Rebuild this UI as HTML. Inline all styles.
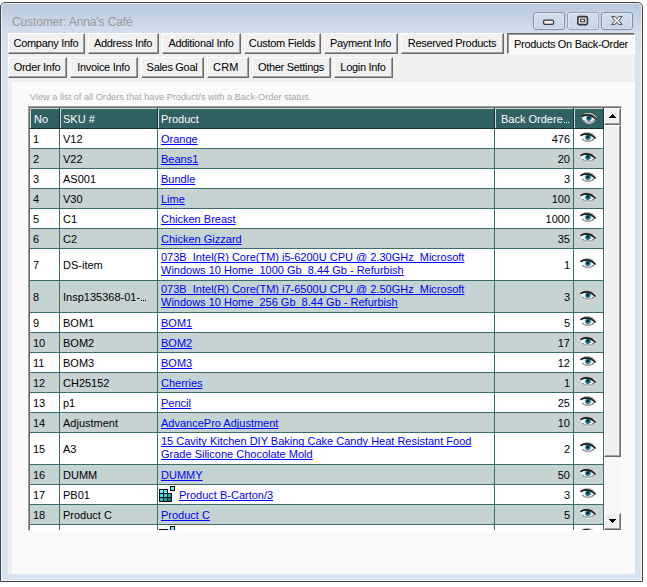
<!DOCTYPE html>
<html><head><meta charset="utf-8"><style>
*{box-sizing:border-box}
html,body{margin:0;padding:0;width:647px;height:587px;overflow:hidden;background:#fff;font-family:"Liberation Sans",sans-serif;font-size:11px}
#win{position:absolute;left:0;top:2px;width:643px;height:580px;border:1px solid #444;border-radius:5px 5px 0 0;background:linear-gradient(#b8c9dc 0px,#c4d3e4 14px,#d2dfed 30px,#d8e4f2 50px,#d8e4f2 100%)}
#win:before{content:"";position:absolute;left:0;top:0;right:0;bottom:0;border:1px solid rgba(255,255,255,.6);border-radius:4px 4px 0 0}
.t{position:absolute;line-height:12px;white-space:nowrap;color:#000}
.t a{color:#0000ff;text-decoration:underline;text-decoration-skip-ink:none}
.t.h{color:#fff}
.dots.dk{background:linear-gradient(90deg,#000 0 1px,transparent 1px 2px,#000 2px 3px,transparent 3px 4px,#000 4px 5px,transparent 5px)}
.dots{display:inline-block;width:6px;height:1px;position:relative;top:0px;margin-left:1px;background:linear-gradient(90deg,#fff 0 1px,transparent 1px 2px,#fff 2px 3px,transparent 3px 4px,#fff 4px 5px,transparent 5px)}
.t.num{transform:translateX(-100%)}
.bt{text-align:center;letter-spacing:-0.3px}
.title{position:absolute;font-size:12px;line-height:12px;color:#9a9a9a;white-space:nowrap;letter-spacing:-0.12px}
.tb{position:absolute;top:12px;width:32px;height:18px;border:1px solid #7e8fac;border-radius:3px;background:linear-gradient(#d3deeb,#c6d5e6)}
.tbg{border-color:#9aa6b6}
.tb:before{content:"";position:absolute;left:0;top:0;right:0;bottom:0;border:1px solid rgba(255,255,255,.35);border-radius:2px}
#client{position:absolute;left:8px;top:33px;width:627px;height:541px;background:#f0f0f0}
.btn{position:absolute;height:21px;background:#f0f0f0;border-top:1px solid #fff;border-left:1px solid #fff;border-right:1px solid #696969;border-bottom:1px solid #696969;box-shadow:inset -1px -1px 0 #a0a0a0}
.btn.sel{border-top:1px solid #696969;border-left:1px solid #696969;border-right:1px solid #fff;border-bottom:1px solid #fff;box-shadow:inset 1px 1px 0 #a0a0a0;background:repeating-conic-gradient(#ffffff 0 25%,#f0f0f0 0 50%) 0 0/2px 2px}
#panel{position:absolute;left:12px;top:82px;width:623px;height:492px;background:#fafafa}
.desc{position:absolute;font-size:9.2px;line-height:12px;color:#a6a6a6;white-space:nowrap}
#tbl{position:absolute;left:28px;top:106px;width:594px;height:425px;border-top:1px solid #a0a0a0;border-left:1px solid #a0a0a0;border-right:1px solid #fff;border-bottom:1px solid #fff;box-shadow:inset 1px 1px 0 #696969,inset -1px -1px 0 #e3e3e3;background:#fff}
#hdr{position:absolute;left:30px;top:108px;width:574px;height:21px;background:#316262}
.hhl{position:absolute;background:#cfdcdc}
.hhd{position:absolute;background:#173030}
#hdr:after{content:"";position:absolute;left:0;bottom:0;width:100%;height:1px;background:#173030}
#clip{position:absolute;left:0;top:0;width:647px;height:530px;overflow:hidden}
.row{position:absolute;left:30px;width:574px}
.grid{position:absolute;background:#3b6d6d}
.eye{position:absolute}
.sbt{position:absolute;background:repeating-conic-gradient(#ffffff 0 25%,#f0f0f0 0 50%) 0 0/2px 2px}
.sb{position:absolute;background:#f0f0f0;border-top:1px solid #fff;border-left:1px solid #fff;border-right:1px solid #696969;border-bottom:1px solid #696969;box-shadow:inset -1px -1px 0 #a0a0a0}
</style></head><body>
<div id="win"></div>
<div class="title" style="left:12px;top:16px">Customer: Anna's Café</div>
<div class="tb" style="left:533px"><svg width="31" height="17" style="position:absolute;left:-1px;top:-1px"><rect x="10.6" y="8.1" width="10" height="4.2" rx="1.3" fill="#f2efea" stroke="#34353d" stroke-width="1.3"/></svg></div>
<div class="tb tbg" style="left:567px"><svg width="31" height="17" style="position:absolute;left:-1px;top:-1px"><rect x="10.8" y="4.6" width="9.6" height="8" rx="1.3" fill="#e4e2de" stroke="#34353d" stroke-width="1.6"/><rect x="13.6" y="7.3" width="4" height="2.4" fill="#fff" stroke="#34353d" stroke-width="1"/></svg></div>
<div class="tb" style="left:601px"><svg width="31" height="17" style="position:absolute;left:-1px;top:-1px"><path d="M10.6 4.6 L14.2 4.6 L15.9 6.8 L17.6 4.6 L21.2 4.6 L17.9 8.5 L21.2 12.4 L17.6 12.4 L15.9 10.2 L14.2 12.4 L10.6 12.4 L13.9 8.5 Z" fill="#f4f4f4" stroke="#4a4b55" stroke-width="1" stroke-linejoin="round"/></svg></div>
<div id="client"></div>
<div class="btn" style="left:8px;top:33px;width:77px"></div>
<div class="t bt" style="left:8px;top:37px;width:76px">Company Info</div>
<div class="btn" style="left:88px;top:33px;width:71px"></div>
<div class="t bt" style="left:88px;top:37px;width:70px">Address Info</div>
<div class="btn" style="left:162px;top:33px;width:79px"></div>
<div class="t bt" style="left:162px;top:37px;width:78px">Additional Info</div>
<div class="btn" style="left:244px;top:33px;width:77px"></div>
<div class="t bt" style="left:244px;top:37px;width:76px">Custom Fields</div>
<div class="btn" style="left:324px;top:33px;width:74px"></div>
<div class="t bt" style="left:324px;top:37px;width:73px">Payment Info</div>
<div class="btn" style="left:401px;top:33px;width:103px"></div>
<div class="t bt" style="left:401px;top:37px;width:102px">Reserved Products</div>
<div class="btn sel" style="left:507px;top:33px;width:128px"></div>
<div class="t bt" style="left:508px;top:38px;width:126px">Products On Back-Order</div>
<div class="btn" style="left:8px;top:57px;width:59px"></div>
<div class="t bt" style="left:8px;top:61px;width:58px">Order Info</div>
<div class="btn" style="left:70px;top:57px;width:68px"></div>
<div class="t bt" style="left:70px;top:61px;width:67px">Invoice Info</div>
<div class="btn" style="left:141px;top:57px;width:63px"></div>
<div class="t bt" style="left:141px;top:61px;width:62px">Sales Goal</div>
<div class="btn" style="left:207px;top:57px;width:42px"></div>
<div class="t bt" style="left:213px;top:61px;text-align:left;letter-spacing:0.2px">CRM</div>
<div class="btn" style="left:252px;top:57px;width:79px"></div>
<div class="t bt" style="left:252px;top:61px;width:78px">Other Settings</div>
<div class="btn" style="left:334px;top:57px;width:59px"></div>
<div class="t bt" style="left:334px;top:61px;width:58px">Login Info</div>
<div id="panel"></div>
<div class="desc" style="left:30px;top:91px">View a list of all Orders that have Product/s with a Back-Order status.</div>
<div id="tbl"></div>
<div id="hdr"></div>
<div class="hhl" style="left:30px;top:108px;width:1px;height:20px"></div>
<div class="hhl" style="left:30px;top:108px;width:29px;height:1px"></div>
<div class="hhd" style="left:59px;top:108px;width:1px;height:21px"></div>
<div class="hhl" style="left:60px;top:108px;width:1px;height:20px"></div>
<div class="hhl" style="left:60px;top:108px;width:97px;height:1px"></div>
<div class="hhd" style="left:157px;top:108px;width:1px;height:21px"></div>
<div class="hhl" style="left:158px;top:108px;width:1px;height:20px"></div>
<div class="hhl" style="left:158px;top:108px;width:336px;height:1px"></div>
<div class="hhd" style="left:494px;top:108px;width:1px;height:21px"></div>
<div class="hhl" style="left:495px;top:108px;width:1px;height:20px"></div>
<div class="hhl" style="left:495px;top:108px;width:78px;height:1px"></div>
<div class="hhd" style="left:573px;top:108px;width:1px;height:21px"></div>
<div class="hhl" style="left:574px;top:108px;width:1px;height:20px"></div>
<div class="hhl" style="left:574px;top:108px;width:29px;height:1px"></div>
<div class="hhd" style="left:603px;top:108px;width:1px;height:21px"></div>
<div class="t h" style="left:34px;top:113px;">No</div>
<div class="t h" style="left:63px;top:113px;">SKU #</div>
<div class="t h" style="left:161px;top:113px;">Product</div>
<div class="t h" style="left:501px;top:113px;">Back Ordere<span class="dots"></span></div>
<svg class="eye" style="left:581px;top:113px" width="16" height="11" viewBox="0 0 16 11"><path d="M0.4 3.4 C3 0.6 6 0 9 0.3 C12 0.7 14.6 2.4 15.9 5.2 C14.6 8.2 12 10.3 8.5 10.7 C5.5 10.9 3.2 9.4 2 7.2 C1.2 6 0.7 4.8 0.4 3.4Z" fill="#f2f2f2"/><path d="M3.5 1.1 C7 0.1 10 0.4 13 1.9" fill="none" stroke="#bdbdbd" stroke-width="1.1"/><path d="M2.4 7 C4.6 10 9.4 10.4 14 7.2" fill="none" stroke="#767676" stroke-width="1.2"/><path d="M4 8.6 C6 9.6 9 9.7 12 8.6" fill="none" stroke="#c8c8c8" stroke-width="0.8"/><circle cx="8" cy="5.1" r="2.7" fill="#137684"/><circle cx="7.7" cy="4.9" r="1.15" fill="#061428"/><path d="M5.8 6.6 C6.4 7.5 7.4 7.8 8.4 7.6" fill="none" stroke="#2a3fb0" stroke-width="0.8"/><path d="M0.4 3.7 C2.5 2 5.5 1.6 8.5 2.1 C11.5 2.6 13.8 4.1 15.4 6.5" fill="none" stroke="#141414" stroke-width="1.6"/><path d="M11 3.4 C12.5 4 14 5 15.2 6.5" fill="none" stroke="#3a3a3a" stroke-width="1.2"/></svg>
<div id="clip"><div class="row" style="top:129px;height:19px;background:#ffffff"></div><div class="t " style="left:33px;top:133px;">1</div><div class="t " style="left:63px;top:133px;">V12</div><div class="t " style="left:161px;top:133px;"><a>Orange</a></div><div class="t num" style="left:570px;top:133px;">476</div><svg class="eye" style="left:580px;top:132px" width="16" height="11" viewBox="0 0 16 11"><path d="M0.4 3.4 C3 0.6 6 0 9 0.3 C12 0.7 14.6 2.4 15.9 5.2 C14.6 8.2 12 10.3 8.5 10.7 C5.5 10.9 3.2 9.4 2 7.2 C1.2 6 0.7 4.8 0.4 3.4Z" fill="#f2f2f2"/><path d="M3.5 1.1 C7 0.1 10 0.4 13 1.9" fill="none" stroke="#bdbdbd" stroke-width="1.1"/><path d="M2.4 7 C4.6 10 9.4 10.4 14 7.2" fill="none" stroke="#767676" stroke-width="1.2"/><path d="M4 8.6 C6 9.6 9 9.7 12 8.6" fill="none" stroke="#c8c8c8" stroke-width="0.8"/><circle cx="8" cy="5.1" r="2.7" fill="#137684"/><circle cx="7.7" cy="4.9" r="1.15" fill="#061428"/><path d="M5.8 6.6 C6.4 7.5 7.4 7.8 8.4 7.6" fill="none" stroke="#2a3fb0" stroke-width="0.8"/><path d="M0.4 3.7 C2.5 2 5.5 1.6 8.5 2.1 C11.5 2.6 13.8 4.1 15.4 6.5" fill="none" stroke="#141414" stroke-width="1.6"/><path d="M11 3.4 C12.5 4 14 5 15.2 6.5" fill="none" stroke="#3a3a3a" stroke-width="1.2"/></svg><div class="grid" style="left:30px;top:148px;width:574px;height:1px"></div><div class="row" style="top:149px;height:19px;background:#c5d3d3"></div><div class="t " style="left:33px;top:153px;">2</div><div class="t " style="left:63px;top:153px;">V22</div><div class="t " style="left:161px;top:153px;"><a>Beans1</a></div><div class="t num" style="left:570px;top:153px;">20</div><svg class="eye" style="left:580px;top:152px" width="16" height="11" viewBox="0 0 16 11"><path d="M0.4 3.4 C3 0.6 6 0 9 0.3 C12 0.7 14.6 2.4 15.9 5.2 C14.6 8.2 12 10.3 8.5 10.7 C5.5 10.9 3.2 9.4 2 7.2 C1.2 6 0.7 4.8 0.4 3.4Z" fill="#f2f2f2"/><path d="M3.5 1.1 C7 0.1 10 0.4 13 1.9" fill="none" stroke="#bdbdbd" stroke-width="1.1"/><path d="M2.4 7 C4.6 10 9.4 10.4 14 7.2" fill="none" stroke="#767676" stroke-width="1.2"/><path d="M4 8.6 C6 9.6 9 9.7 12 8.6" fill="none" stroke="#c8c8c8" stroke-width="0.8"/><circle cx="8" cy="5.1" r="2.7" fill="#137684"/><circle cx="7.7" cy="4.9" r="1.15" fill="#061428"/><path d="M5.8 6.6 C6.4 7.5 7.4 7.8 8.4 7.6" fill="none" stroke="#2a3fb0" stroke-width="0.8"/><path d="M0.4 3.7 C2.5 2 5.5 1.6 8.5 2.1 C11.5 2.6 13.8 4.1 15.4 6.5" fill="none" stroke="#141414" stroke-width="1.6"/><path d="M11 3.4 C12.5 4 14 5 15.2 6.5" fill="none" stroke="#3a3a3a" stroke-width="1.2"/></svg><div class="grid" style="left:30px;top:168px;width:574px;height:1px"></div><div class="row" style="top:169px;height:19px;background:#ffffff"></div><div class="t " style="left:33px;top:173px;">3</div><div class="t " style="left:63px;top:173px;">AS001</div><div class="t " style="left:161px;top:173px;"><a>Bundle</a></div><div class="t num" style="left:570px;top:173px;">3</div><svg class="eye" style="left:580px;top:172px" width="16" height="11" viewBox="0 0 16 11"><path d="M0.4 3.4 C3 0.6 6 0 9 0.3 C12 0.7 14.6 2.4 15.9 5.2 C14.6 8.2 12 10.3 8.5 10.7 C5.5 10.9 3.2 9.4 2 7.2 C1.2 6 0.7 4.8 0.4 3.4Z" fill="#f2f2f2"/><path d="M3.5 1.1 C7 0.1 10 0.4 13 1.9" fill="none" stroke="#bdbdbd" stroke-width="1.1"/><path d="M2.4 7 C4.6 10 9.4 10.4 14 7.2" fill="none" stroke="#767676" stroke-width="1.2"/><path d="M4 8.6 C6 9.6 9 9.7 12 8.6" fill="none" stroke="#c8c8c8" stroke-width="0.8"/><circle cx="8" cy="5.1" r="2.7" fill="#137684"/><circle cx="7.7" cy="4.9" r="1.15" fill="#061428"/><path d="M5.8 6.6 C6.4 7.5 7.4 7.8 8.4 7.6" fill="none" stroke="#2a3fb0" stroke-width="0.8"/><path d="M0.4 3.7 C2.5 2 5.5 1.6 8.5 2.1 C11.5 2.6 13.8 4.1 15.4 6.5" fill="none" stroke="#141414" stroke-width="1.6"/><path d="M11 3.4 C12.5 4 14 5 15.2 6.5" fill="none" stroke="#3a3a3a" stroke-width="1.2"/></svg><div class="grid" style="left:30px;top:188px;width:574px;height:1px"></div><div class="row" style="top:189px;height:19px;background:#c5d3d3"></div><div class="t " style="left:33px;top:193px;">4</div><div class="t " style="left:63px;top:193px;">V30</div><div class="t " style="left:161px;top:193px;"><a>Lime</a></div><div class="t num" style="left:570px;top:193px;">100</div><svg class="eye" style="left:580px;top:192px" width="16" height="11" viewBox="0 0 16 11"><path d="M0.4 3.4 C3 0.6 6 0 9 0.3 C12 0.7 14.6 2.4 15.9 5.2 C14.6 8.2 12 10.3 8.5 10.7 C5.5 10.9 3.2 9.4 2 7.2 C1.2 6 0.7 4.8 0.4 3.4Z" fill="#f2f2f2"/><path d="M3.5 1.1 C7 0.1 10 0.4 13 1.9" fill="none" stroke="#bdbdbd" stroke-width="1.1"/><path d="M2.4 7 C4.6 10 9.4 10.4 14 7.2" fill="none" stroke="#767676" stroke-width="1.2"/><path d="M4 8.6 C6 9.6 9 9.7 12 8.6" fill="none" stroke="#c8c8c8" stroke-width="0.8"/><circle cx="8" cy="5.1" r="2.7" fill="#137684"/><circle cx="7.7" cy="4.9" r="1.15" fill="#061428"/><path d="M5.8 6.6 C6.4 7.5 7.4 7.8 8.4 7.6" fill="none" stroke="#2a3fb0" stroke-width="0.8"/><path d="M0.4 3.7 C2.5 2 5.5 1.6 8.5 2.1 C11.5 2.6 13.8 4.1 15.4 6.5" fill="none" stroke="#141414" stroke-width="1.6"/><path d="M11 3.4 C12.5 4 14 5 15.2 6.5" fill="none" stroke="#3a3a3a" stroke-width="1.2"/></svg><div class="grid" style="left:30px;top:208px;width:574px;height:1px"></div><div class="row" style="top:209px;height:19px;background:#ffffff"></div><div class="t " style="left:33px;top:213px;">5</div><div class="t " style="left:63px;top:213px;">C1</div><div class="t " style="left:161px;top:213px;"><a>Chicken Breast</a></div><div class="t num" style="left:570px;top:213px;">1000</div><svg class="eye" style="left:580px;top:212px" width="16" height="11" viewBox="0 0 16 11"><path d="M0.4 3.4 C3 0.6 6 0 9 0.3 C12 0.7 14.6 2.4 15.9 5.2 C14.6 8.2 12 10.3 8.5 10.7 C5.5 10.9 3.2 9.4 2 7.2 C1.2 6 0.7 4.8 0.4 3.4Z" fill="#f2f2f2"/><path d="M3.5 1.1 C7 0.1 10 0.4 13 1.9" fill="none" stroke="#bdbdbd" stroke-width="1.1"/><path d="M2.4 7 C4.6 10 9.4 10.4 14 7.2" fill="none" stroke="#767676" stroke-width="1.2"/><path d="M4 8.6 C6 9.6 9 9.7 12 8.6" fill="none" stroke="#c8c8c8" stroke-width="0.8"/><circle cx="8" cy="5.1" r="2.7" fill="#137684"/><circle cx="7.7" cy="4.9" r="1.15" fill="#061428"/><path d="M5.8 6.6 C6.4 7.5 7.4 7.8 8.4 7.6" fill="none" stroke="#2a3fb0" stroke-width="0.8"/><path d="M0.4 3.7 C2.5 2 5.5 1.6 8.5 2.1 C11.5 2.6 13.8 4.1 15.4 6.5" fill="none" stroke="#141414" stroke-width="1.6"/><path d="M11 3.4 C12.5 4 14 5 15.2 6.5" fill="none" stroke="#3a3a3a" stroke-width="1.2"/></svg><div class="grid" style="left:30px;top:228px;width:574px;height:1px"></div><div class="row" style="top:229px;height:19px;background:#c5d3d3"></div><div class="t " style="left:33px;top:233px;">6</div><div class="t " style="left:63px;top:233px;">C2</div><div class="t " style="left:161px;top:233px;"><a>Chicken Gizzard</a></div><div class="t num" style="left:570px;top:233px;">35</div><svg class="eye" style="left:580px;top:232px" width="16" height="11" viewBox="0 0 16 11"><path d="M0.4 3.4 C3 0.6 6 0 9 0.3 C12 0.7 14.6 2.4 15.9 5.2 C14.6 8.2 12 10.3 8.5 10.7 C5.5 10.9 3.2 9.4 2 7.2 C1.2 6 0.7 4.8 0.4 3.4Z" fill="#f2f2f2"/><path d="M3.5 1.1 C7 0.1 10 0.4 13 1.9" fill="none" stroke="#bdbdbd" stroke-width="1.1"/><path d="M2.4 7 C4.6 10 9.4 10.4 14 7.2" fill="none" stroke="#767676" stroke-width="1.2"/><path d="M4 8.6 C6 9.6 9 9.7 12 8.6" fill="none" stroke="#c8c8c8" stroke-width="0.8"/><circle cx="8" cy="5.1" r="2.7" fill="#137684"/><circle cx="7.7" cy="4.9" r="1.15" fill="#061428"/><path d="M5.8 6.6 C6.4 7.5 7.4 7.8 8.4 7.6" fill="none" stroke="#2a3fb0" stroke-width="0.8"/><path d="M0.4 3.7 C2.5 2 5.5 1.6 8.5 2.1 C11.5 2.6 13.8 4.1 15.4 6.5" fill="none" stroke="#141414" stroke-width="1.6"/><path d="M11 3.4 C12.5 4 14 5 15.2 6.5" fill="none" stroke="#3a3a3a" stroke-width="1.2"/></svg><div class="grid" style="left:30px;top:248px;width:574px;height:1px"></div><div class="row" style="top:249px;height:31px;background:#ffffff"></div><div class="t " style="left:33px;top:259px;">7</div><div class="t " style="left:63px;top:259px;">DS-item</div><div class="t " style="left:161px;top:251px;"><a>073B&nbsp; Intel(R) Core(TM) i5-6200U CPU @ 2.30GHz&nbsp; Microsoft</a></div><div class="t " style="left:161px;top:264px;"><a>Windows 10 Home&nbsp; 1000 Gb&nbsp; 8.44 Gb - Refurbish</a></div><div class="t num" style="left:570px;top:259px;">1</div><svg class="eye" style="left:580px;top:258px" width="16" height="11" viewBox="0 0 16 11"><path d="M0.4 3.4 C3 0.6 6 0 9 0.3 C12 0.7 14.6 2.4 15.9 5.2 C14.6 8.2 12 10.3 8.5 10.7 C5.5 10.9 3.2 9.4 2 7.2 C1.2 6 0.7 4.8 0.4 3.4Z" fill="#f2f2f2"/><path d="M3.5 1.1 C7 0.1 10 0.4 13 1.9" fill="none" stroke="#bdbdbd" stroke-width="1.1"/><path d="M2.4 7 C4.6 10 9.4 10.4 14 7.2" fill="none" stroke="#767676" stroke-width="1.2"/><path d="M4 8.6 C6 9.6 9 9.7 12 8.6" fill="none" stroke="#c8c8c8" stroke-width="0.8"/><circle cx="8" cy="5.1" r="2.7" fill="#137684"/><circle cx="7.7" cy="4.9" r="1.15" fill="#061428"/><path d="M5.8 6.6 C6.4 7.5 7.4 7.8 8.4 7.6" fill="none" stroke="#2a3fb0" stroke-width="0.8"/><path d="M0.4 3.7 C2.5 2 5.5 1.6 8.5 2.1 C11.5 2.6 13.8 4.1 15.4 6.5" fill="none" stroke="#141414" stroke-width="1.6"/><path d="M11 3.4 C12.5 4 14 5 15.2 6.5" fill="none" stroke="#3a3a3a" stroke-width="1.2"/></svg><div class="grid" style="left:30px;top:280px;width:574px;height:1px"></div><div class="row" style="top:281px;height:31px;background:#c5d3d3"></div><div class="t " style="left:33px;top:291px;">8</div><div class="t " style="left:63px;top:291px;">Insp135368-01-<span class="dots dk"></span></div><div class="t " style="left:161px;top:283px;"><a>073B&nbsp; Intel(R) Core(TM) i7-6500U CPU @ 2.50GHz&nbsp; Microsoft</a></div><div class="t " style="left:161px;top:296px;"><a>Windows 10 Home&nbsp; 256 Gb&nbsp; 8.44 Gb - Refurbish</a></div><div class="t num" style="left:570px;top:291px;">3</div><svg class="eye" style="left:580px;top:290px" width="16" height="11" viewBox="0 0 16 11"><path d="M0.4 3.4 C3 0.6 6 0 9 0.3 C12 0.7 14.6 2.4 15.9 5.2 C14.6 8.2 12 10.3 8.5 10.7 C5.5 10.9 3.2 9.4 2 7.2 C1.2 6 0.7 4.8 0.4 3.4Z" fill="#f2f2f2"/><path d="M3.5 1.1 C7 0.1 10 0.4 13 1.9" fill="none" stroke="#bdbdbd" stroke-width="1.1"/><path d="M2.4 7 C4.6 10 9.4 10.4 14 7.2" fill="none" stroke="#767676" stroke-width="1.2"/><path d="M4 8.6 C6 9.6 9 9.7 12 8.6" fill="none" stroke="#c8c8c8" stroke-width="0.8"/><circle cx="8" cy="5.1" r="2.7" fill="#137684"/><circle cx="7.7" cy="4.9" r="1.15" fill="#061428"/><path d="M5.8 6.6 C6.4 7.5 7.4 7.8 8.4 7.6" fill="none" stroke="#2a3fb0" stroke-width="0.8"/><path d="M0.4 3.7 C2.5 2 5.5 1.6 8.5 2.1 C11.5 2.6 13.8 4.1 15.4 6.5" fill="none" stroke="#141414" stroke-width="1.6"/><path d="M11 3.4 C12.5 4 14 5 15.2 6.5" fill="none" stroke="#3a3a3a" stroke-width="1.2"/></svg><div class="grid" style="left:30px;top:312px;width:574px;height:1px"></div><div class="row" style="top:313px;height:19px;background:#ffffff"></div><div class="t " style="left:33px;top:317px;">9</div><div class="t " style="left:63px;top:317px;">BOM1</div><div class="t " style="left:161px;top:317px;"><a>BOM1</a></div><div class="t num" style="left:570px;top:317px;">5</div><svg class="eye" style="left:580px;top:316px" width="16" height="11" viewBox="0 0 16 11"><path d="M0.4 3.4 C3 0.6 6 0 9 0.3 C12 0.7 14.6 2.4 15.9 5.2 C14.6 8.2 12 10.3 8.5 10.7 C5.5 10.9 3.2 9.4 2 7.2 C1.2 6 0.7 4.8 0.4 3.4Z" fill="#f2f2f2"/><path d="M3.5 1.1 C7 0.1 10 0.4 13 1.9" fill="none" stroke="#bdbdbd" stroke-width="1.1"/><path d="M2.4 7 C4.6 10 9.4 10.4 14 7.2" fill="none" stroke="#767676" stroke-width="1.2"/><path d="M4 8.6 C6 9.6 9 9.7 12 8.6" fill="none" stroke="#c8c8c8" stroke-width="0.8"/><circle cx="8" cy="5.1" r="2.7" fill="#137684"/><circle cx="7.7" cy="4.9" r="1.15" fill="#061428"/><path d="M5.8 6.6 C6.4 7.5 7.4 7.8 8.4 7.6" fill="none" stroke="#2a3fb0" stroke-width="0.8"/><path d="M0.4 3.7 C2.5 2 5.5 1.6 8.5 2.1 C11.5 2.6 13.8 4.1 15.4 6.5" fill="none" stroke="#141414" stroke-width="1.6"/><path d="M11 3.4 C12.5 4 14 5 15.2 6.5" fill="none" stroke="#3a3a3a" stroke-width="1.2"/></svg><div class="grid" style="left:30px;top:332px;width:574px;height:1px"></div><div class="row" style="top:333px;height:19px;background:#c5d3d3"></div><div class="t " style="left:33px;top:337px;">10</div><div class="t " style="left:63px;top:337px;">BOM2</div><div class="t " style="left:161px;top:337px;"><a>BOM2</a></div><div class="t num" style="left:570px;top:337px;">17</div><svg class="eye" style="left:580px;top:336px" width="16" height="11" viewBox="0 0 16 11"><path d="M0.4 3.4 C3 0.6 6 0 9 0.3 C12 0.7 14.6 2.4 15.9 5.2 C14.6 8.2 12 10.3 8.5 10.7 C5.5 10.9 3.2 9.4 2 7.2 C1.2 6 0.7 4.8 0.4 3.4Z" fill="#f2f2f2"/><path d="M3.5 1.1 C7 0.1 10 0.4 13 1.9" fill="none" stroke="#bdbdbd" stroke-width="1.1"/><path d="M2.4 7 C4.6 10 9.4 10.4 14 7.2" fill="none" stroke="#767676" stroke-width="1.2"/><path d="M4 8.6 C6 9.6 9 9.7 12 8.6" fill="none" stroke="#c8c8c8" stroke-width="0.8"/><circle cx="8" cy="5.1" r="2.7" fill="#137684"/><circle cx="7.7" cy="4.9" r="1.15" fill="#061428"/><path d="M5.8 6.6 C6.4 7.5 7.4 7.8 8.4 7.6" fill="none" stroke="#2a3fb0" stroke-width="0.8"/><path d="M0.4 3.7 C2.5 2 5.5 1.6 8.5 2.1 C11.5 2.6 13.8 4.1 15.4 6.5" fill="none" stroke="#141414" stroke-width="1.6"/><path d="M11 3.4 C12.5 4 14 5 15.2 6.5" fill="none" stroke="#3a3a3a" stroke-width="1.2"/></svg><div class="grid" style="left:30px;top:352px;width:574px;height:1px"></div><div class="row" style="top:353px;height:19px;background:#ffffff"></div><div class="t " style="left:33px;top:357px;">11</div><div class="t " style="left:63px;top:357px;">BOM3</div><div class="t " style="left:161px;top:357px;"><a>BOM3</a></div><div class="t num" style="left:570px;top:357px;">12</div><svg class="eye" style="left:580px;top:356px" width="16" height="11" viewBox="0 0 16 11"><path d="M0.4 3.4 C3 0.6 6 0 9 0.3 C12 0.7 14.6 2.4 15.9 5.2 C14.6 8.2 12 10.3 8.5 10.7 C5.5 10.9 3.2 9.4 2 7.2 C1.2 6 0.7 4.8 0.4 3.4Z" fill="#f2f2f2"/><path d="M3.5 1.1 C7 0.1 10 0.4 13 1.9" fill="none" stroke="#bdbdbd" stroke-width="1.1"/><path d="M2.4 7 C4.6 10 9.4 10.4 14 7.2" fill="none" stroke="#767676" stroke-width="1.2"/><path d="M4 8.6 C6 9.6 9 9.7 12 8.6" fill="none" stroke="#c8c8c8" stroke-width="0.8"/><circle cx="8" cy="5.1" r="2.7" fill="#137684"/><circle cx="7.7" cy="4.9" r="1.15" fill="#061428"/><path d="M5.8 6.6 C6.4 7.5 7.4 7.8 8.4 7.6" fill="none" stroke="#2a3fb0" stroke-width="0.8"/><path d="M0.4 3.7 C2.5 2 5.5 1.6 8.5 2.1 C11.5 2.6 13.8 4.1 15.4 6.5" fill="none" stroke="#141414" stroke-width="1.6"/><path d="M11 3.4 C12.5 4 14 5 15.2 6.5" fill="none" stroke="#3a3a3a" stroke-width="1.2"/></svg><div class="grid" style="left:30px;top:372px;width:574px;height:1px"></div><div class="row" style="top:373px;height:19px;background:#c5d3d3"></div><div class="t " style="left:33px;top:377px;">12</div><div class="t " style="left:63px;top:377px;">CH25152</div><div class="t " style="left:161px;top:377px;"><a>Cherries</a></div><div class="t num" style="left:570px;top:377px;">1</div><svg class="eye" style="left:580px;top:376px" width="16" height="11" viewBox="0 0 16 11"><path d="M0.4 3.4 C3 0.6 6 0 9 0.3 C12 0.7 14.6 2.4 15.9 5.2 C14.6 8.2 12 10.3 8.5 10.7 C5.5 10.9 3.2 9.4 2 7.2 C1.2 6 0.7 4.8 0.4 3.4Z" fill="#f2f2f2"/><path d="M3.5 1.1 C7 0.1 10 0.4 13 1.9" fill="none" stroke="#bdbdbd" stroke-width="1.1"/><path d="M2.4 7 C4.6 10 9.4 10.4 14 7.2" fill="none" stroke="#767676" stroke-width="1.2"/><path d="M4 8.6 C6 9.6 9 9.7 12 8.6" fill="none" stroke="#c8c8c8" stroke-width="0.8"/><circle cx="8" cy="5.1" r="2.7" fill="#137684"/><circle cx="7.7" cy="4.9" r="1.15" fill="#061428"/><path d="M5.8 6.6 C6.4 7.5 7.4 7.8 8.4 7.6" fill="none" stroke="#2a3fb0" stroke-width="0.8"/><path d="M0.4 3.7 C2.5 2 5.5 1.6 8.5 2.1 C11.5 2.6 13.8 4.1 15.4 6.5" fill="none" stroke="#141414" stroke-width="1.6"/><path d="M11 3.4 C12.5 4 14 5 15.2 6.5" fill="none" stroke="#3a3a3a" stroke-width="1.2"/></svg><div class="grid" style="left:30px;top:392px;width:574px;height:1px"></div><div class="row" style="top:393px;height:19px;background:#ffffff"></div><div class="t " style="left:33px;top:397px;">13</div><div class="t " style="left:63px;top:397px;">p1</div><div class="t " style="left:161px;top:397px;"><a>Pencil</a></div><div class="t num" style="left:570px;top:397px;">25</div><svg class="eye" style="left:580px;top:396px" width="16" height="11" viewBox="0 0 16 11"><path d="M0.4 3.4 C3 0.6 6 0 9 0.3 C12 0.7 14.6 2.4 15.9 5.2 C14.6 8.2 12 10.3 8.5 10.7 C5.5 10.9 3.2 9.4 2 7.2 C1.2 6 0.7 4.8 0.4 3.4Z" fill="#f2f2f2"/><path d="M3.5 1.1 C7 0.1 10 0.4 13 1.9" fill="none" stroke="#bdbdbd" stroke-width="1.1"/><path d="M2.4 7 C4.6 10 9.4 10.4 14 7.2" fill="none" stroke="#767676" stroke-width="1.2"/><path d="M4 8.6 C6 9.6 9 9.7 12 8.6" fill="none" stroke="#c8c8c8" stroke-width="0.8"/><circle cx="8" cy="5.1" r="2.7" fill="#137684"/><circle cx="7.7" cy="4.9" r="1.15" fill="#061428"/><path d="M5.8 6.6 C6.4 7.5 7.4 7.8 8.4 7.6" fill="none" stroke="#2a3fb0" stroke-width="0.8"/><path d="M0.4 3.7 C2.5 2 5.5 1.6 8.5 2.1 C11.5 2.6 13.8 4.1 15.4 6.5" fill="none" stroke="#141414" stroke-width="1.6"/><path d="M11 3.4 C12.5 4 14 5 15.2 6.5" fill="none" stroke="#3a3a3a" stroke-width="1.2"/></svg><div class="grid" style="left:30px;top:412px;width:574px;height:1px"></div><div class="row" style="top:413px;height:19px;background:#c5d3d3"></div><div class="t " style="left:33px;top:417px;">14</div><div class="t " style="left:63px;top:417px;">Adjustment</div><div class="t " style="left:161px;top:417px;"><a>AdvancePro Adjustment</a></div><div class="t num" style="left:570px;top:417px;">10</div><svg class="eye" style="left:580px;top:416px" width="16" height="11" viewBox="0 0 16 11"><path d="M0.4 3.4 C3 0.6 6 0 9 0.3 C12 0.7 14.6 2.4 15.9 5.2 C14.6 8.2 12 10.3 8.5 10.7 C5.5 10.9 3.2 9.4 2 7.2 C1.2 6 0.7 4.8 0.4 3.4Z" fill="#f2f2f2"/><path d="M3.5 1.1 C7 0.1 10 0.4 13 1.9" fill="none" stroke="#bdbdbd" stroke-width="1.1"/><path d="M2.4 7 C4.6 10 9.4 10.4 14 7.2" fill="none" stroke="#767676" stroke-width="1.2"/><path d="M4 8.6 C6 9.6 9 9.7 12 8.6" fill="none" stroke="#c8c8c8" stroke-width="0.8"/><circle cx="8" cy="5.1" r="2.7" fill="#137684"/><circle cx="7.7" cy="4.9" r="1.15" fill="#061428"/><path d="M5.8 6.6 C6.4 7.5 7.4 7.8 8.4 7.6" fill="none" stroke="#2a3fb0" stroke-width="0.8"/><path d="M0.4 3.7 C2.5 2 5.5 1.6 8.5 2.1 C11.5 2.6 13.8 4.1 15.4 6.5" fill="none" stroke="#141414" stroke-width="1.6"/><path d="M11 3.4 C12.5 4 14 5 15.2 6.5" fill="none" stroke="#3a3a3a" stroke-width="1.2"/></svg><div class="grid" style="left:30px;top:432px;width:574px;height:1px"></div><div class="row" style="top:433px;height:31px;background:#ffffff"></div><div class="t " style="left:33px;top:443px;">15</div><div class="t " style="left:63px;top:443px;">A3</div><div class="t " style="left:161px;top:435px;"><a>15 Cavity Kitchen DIY Baking Cake Candy Heat Resistant Food</a></div><div class="t " style="left:161px;top:448px;"><a>Grade Silicone Chocolate Mold</a></div><div class="t num" style="left:570px;top:443px;">2</div><svg class="eye" style="left:580px;top:442px" width="16" height="11" viewBox="0 0 16 11"><path d="M0.4 3.4 C3 0.6 6 0 9 0.3 C12 0.7 14.6 2.4 15.9 5.2 C14.6 8.2 12 10.3 8.5 10.7 C5.5 10.9 3.2 9.4 2 7.2 C1.2 6 0.7 4.8 0.4 3.4Z" fill="#f2f2f2"/><path d="M3.5 1.1 C7 0.1 10 0.4 13 1.9" fill="none" stroke="#bdbdbd" stroke-width="1.1"/><path d="M2.4 7 C4.6 10 9.4 10.4 14 7.2" fill="none" stroke="#767676" stroke-width="1.2"/><path d="M4 8.6 C6 9.6 9 9.7 12 8.6" fill="none" stroke="#c8c8c8" stroke-width="0.8"/><circle cx="8" cy="5.1" r="2.7" fill="#137684"/><circle cx="7.7" cy="4.9" r="1.15" fill="#061428"/><path d="M5.8 6.6 C6.4 7.5 7.4 7.8 8.4 7.6" fill="none" stroke="#2a3fb0" stroke-width="0.8"/><path d="M0.4 3.7 C2.5 2 5.5 1.6 8.5 2.1 C11.5 2.6 13.8 4.1 15.4 6.5" fill="none" stroke="#141414" stroke-width="1.6"/><path d="M11 3.4 C12.5 4 14 5 15.2 6.5" fill="none" stroke="#3a3a3a" stroke-width="1.2"/></svg><div class="grid" style="left:30px;top:464px;width:574px;height:1px"></div><div class="row" style="top:465px;height:19px;background:#c5d3d3"></div><div class="t " style="left:33px;top:469px;">16</div><div class="t " style="left:63px;top:469px;">DUMM</div><div class="t " style="left:161px;top:469px;"><a>DUMMY</a></div><div class="t num" style="left:570px;top:469px;">50</div><svg class="eye" style="left:580px;top:468px" width="16" height="11" viewBox="0 0 16 11"><path d="M0.4 3.4 C3 0.6 6 0 9 0.3 C12 0.7 14.6 2.4 15.9 5.2 C14.6 8.2 12 10.3 8.5 10.7 C5.5 10.9 3.2 9.4 2 7.2 C1.2 6 0.7 4.8 0.4 3.4Z" fill="#f2f2f2"/><path d="M3.5 1.1 C7 0.1 10 0.4 13 1.9" fill="none" stroke="#bdbdbd" stroke-width="1.1"/><path d="M2.4 7 C4.6 10 9.4 10.4 14 7.2" fill="none" stroke="#767676" stroke-width="1.2"/><path d="M4 8.6 C6 9.6 9 9.7 12 8.6" fill="none" stroke="#c8c8c8" stroke-width="0.8"/><circle cx="8" cy="5.1" r="2.7" fill="#137684"/><circle cx="7.7" cy="4.9" r="1.15" fill="#061428"/><path d="M5.8 6.6 C6.4 7.5 7.4 7.8 8.4 7.6" fill="none" stroke="#2a3fb0" stroke-width="0.8"/><path d="M0.4 3.7 C2.5 2 5.5 1.6 8.5 2.1 C11.5 2.6 13.8 4.1 15.4 6.5" fill="none" stroke="#141414" stroke-width="1.6"/><path d="M11 3.4 C12.5 4 14 5 15.2 6.5" fill="none" stroke="#3a3a3a" stroke-width="1.2"/></svg><div class="grid" style="left:30px;top:484px;width:574px;height:1px"></div><div class="row" style="top:485px;height:19px;background:#ffffff"></div><div class="t " style="left:33px;top:489px;">17</div><div class="t " style="left:63px;top:489px;">PB01</div><div style="position:absolute;left:159px;top:486px;width:16px;height:16px"><svg style="position:absolute;left:0;top:0" width="16" height="16" viewBox="0 0 16 16"><rect x="11" y="0" width="5" height="5" fill="#000"/><rect x="12" y="1" width="3" height="3" fill="#3ff"/><path d="M0 3 H9 V7 H13 V16 H0Z" fill="#111"/><rect x="1" y="4" width="3" height="3" fill="#6ff4f8"/><rect x="5" y="4" width="3" height="3" fill="#50e8f0"/><rect x="1" y="8" width="3" height="3" fill="#48e0e8"/><rect x="5" y="8" width="3" height="3" fill="#38ccd4"/><rect x="9" y="8" width="3" height="3" fill="#2aa8b0"/><rect x="1" y="12" width="3" height="3" fill="#30b8c0"/><rect x="5" y="12" width="3" height="3" fill="#209aa0"/><rect x="9" y="12" width="3" height="3" fill="#167c80"/></svg></div><div class="t " style="left:179px;top:489px;"><a>Product B-Carton/3</a></div><div class="t num" style="left:570px;top:489px;">3</div><svg class="eye" style="left:580px;top:488px" width="16" height="11" viewBox="0 0 16 11"><path d="M0.4 3.4 C3 0.6 6 0 9 0.3 C12 0.7 14.6 2.4 15.9 5.2 C14.6 8.2 12 10.3 8.5 10.7 C5.5 10.9 3.2 9.4 2 7.2 C1.2 6 0.7 4.8 0.4 3.4Z" fill="#f2f2f2"/><path d="M3.5 1.1 C7 0.1 10 0.4 13 1.9" fill="none" stroke="#bdbdbd" stroke-width="1.1"/><path d="M2.4 7 C4.6 10 9.4 10.4 14 7.2" fill="none" stroke="#767676" stroke-width="1.2"/><path d="M4 8.6 C6 9.6 9 9.7 12 8.6" fill="none" stroke="#c8c8c8" stroke-width="0.8"/><circle cx="8" cy="5.1" r="2.7" fill="#137684"/><circle cx="7.7" cy="4.9" r="1.15" fill="#061428"/><path d="M5.8 6.6 C6.4 7.5 7.4 7.8 8.4 7.6" fill="none" stroke="#2a3fb0" stroke-width="0.8"/><path d="M0.4 3.7 C2.5 2 5.5 1.6 8.5 2.1 C11.5 2.6 13.8 4.1 15.4 6.5" fill="none" stroke="#141414" stroke-width="1.6"/><path d="M11 3.4 C12.5 4 14 5 15.2 6.5" fill="none" stroke="#3a3a3a" stroke-width="1.2"/></svg><div class="grid" style="left:30px;top:504px;width:574px;height:1px"></div><div class="row" style="top:505px;height:19px;background:#c5d3d3"></div><div class="t " style="left:33px;top:509px;">18</div><div class="t " style="left:63px;top:509px;">Product C</div><div class="t " style="left:161px;top:509px;"><a>Product C</a></div><div class="t num" style="left:570px;top:509px;">5</div><svg class="eye" style="left:580px;top:508px" width="16" height="11" viewBox="0 0 16 11"><path d="M0.4 3.4 C3 0.6 6 0 9 0.3 C12 0.7 14.6 2.4 15.9 5.2 C14.6 8.2 12 10.3 8.5 10.7 C5.5 10.9 3.2 9.4 2 7.2 C1.2 6 0.7 4.8 0.4 3.4Z" fill="#f2f2f2"/><path d="M3.5 1.1 C7 0.1 10 0.4 13 1.9" fill="none" stroke="#bdbdbd" stroke-width="1.1"/><path d="M2.4 7 C4.6 10 9.4 10.4 14 7.2" fill="none" stroke="#767676" stroke-width="1.2"/><path d="M4 8.6 C6 9.6 9 9.7 12 8.6" fill="none" stroke="#c8c8c8" stroke-width="0.8"/><circle cx="8" cy="5.1" r="2.7" fill="#137684"/><circle cx="7.7" cy="4.9" r="1.15" fill="#061428"/><path d="M5.8 6.6 C6.4 7.5 7.4 7.8 8.4 7.6" fill="none" stroke="#2a3fb0" stroke-width="0.8"/><path d="M0.4 3.7 C2.5 2 5.5 1.6 8.5 2.1 C11.5 2.6 13.8 4.1 15.4 6.5" fill="none" stroke="#141414" stroke-width="1.6"/><path d="M11 3.4 C12.5 4 14 5 15.2 6.5" fill="none" stroke="#3a3a3a" stroke-width="1.2"/></svg><div class="grid" style="left:30px;top:524px;width:574px;height:1px"></div><div class="row" style="top:525px;height:19px;background:#ffffff"></div><div class="t " style="left:33px;top:529px;">19</div><div style="position:absolute;left:159px;top:526px;width:16px;height:16px"><svg style="position:absolute;left:0;top:0" width="16" height="16" viewBox="0 0 16 16"><rect x="11" y="0" width="5" height="5" fill="#000"/><rect x="12" y="1" width="3" height="3" fill="#3ff"/><path d="M0 3 H9 V7 H13 V16 H0Z" fill="#111"/><rect x="1" y="4" width="3" height="3" fill="#6ff4f8"/><rect x="5" y="4" width="3" height="3" fill="#50e8f0"/><rect x="1" y="8" width="3" height="3" fill="#48e0e8"/><rect x="5" y="8" width="3" height="3" fill="#38ccd4"/><rect x="9" y="8" width="3" height="3" fill="#2aa8b0"/><rect x="1" y="12" width="3" height="3" fill="#30b8c0"/><rect x="5" y="12" width="3" height="3" fill="#209aa0"/><rect x="9" y="12" width="3" height="3" fill="#167c80"/></svg></div><svg class="eye" style="left:580px;top:528px" width="16" height="11" viewBox="0 0 16 11"><path d="M0.4 3.4 C3 0.6 6 0 9 0.3 C12 0.7 14.6 2.4 15.9 5.2 C14.6 8.2 12 10.3 8.5 10.7 C5.5 10.9 3.2 9.4 2 7.2 C1.2 6 0.7 4.8 0.4 3.4Z" fill="#f2f2f2"/><path d="M3.5 1.1 C7 0.1 10 0.4 13 1.9" fill="none" stroke="#bdbdbd" stroke-width="1.1"/><path d="M2.4 7 C4.6 10 9.4 10.4 14 7.2" fill="none" stroke="#767676" stroke-width="1.2"/><path d="M4 8.6 C6 9.6 9 9.7 12 8.6" fill="none" stroke="#c8c8c8" stroke-width="0.8"/><circle cx="8" cy="5.1" r="2.7" fill="#137684"/><circle cx="7.7" cy="4.9" r="1.15" fill="#061428"/><path d="M5.8 6.6 C6.4 7.5 7.4 7.8 8.4 7.6" fill="none" stroke="#2a3fb0" stroke-width="0.8"/><path d="M0.4 3.7 C2.5 2 5.5 1.6 8.5 2.1 C11.5 2.6 13.8 4.1 15.4 6.5" fill="none" stroke="#141414" stroke-width="1.6"/><path d="M11 3.4 C12.5 4 14 5 15.2 6.5" fill="none" stroke="#3a3a3a" stroke-width="1.2"/></svg><div class="grid" style="left:30px;top:544px;width:574px;height:1px"></div><div class="grid" style="left:59px;top:129px;width:1px;height:401px"></div><div class="grid" style="left:157px;top:129px;width:1px;height:401px"></div><div class="grid" style="left:494px;top:129px;width:1px;height:401px"></div><div class="grid" style="left:573px;top:129px;width:1px;height:401px"></div><div class="grid" style="left:603px;top:129px;width:1px;height:401px"></div></div>
<div class="sbt" style="left:604px;top:108px;width:17px;height:422px"></div>
<div class="sb" style="left:604px;top:108px;width:17px;height:17px"></div>
<div class="sb" style="left:604px;top:125px;width:17px;height:332px"></div>
<div class="sb" style="left:604px;top:513px;width:17px;height:17px"></div>
<div style="position:absolute;left:0;top:0;width:647px;height:587px;pointer-events:none"><svg width="647" height="587" style="position:absolute;left:0;top:0" shape-rendering="crispEdges" fill="#000"><rect x="612" y="114" width="1" height="1"/><rect x="611" y="115" width="3" height="1"/><rect x="610" y="116" width="5" height="1"/><rect x="609" y="117" width="7" height="1"/><rect x="609" y="519" width="7" height="1"/><rect x="610" y="520" width="5" height="1"/><rect x="611" y="521" width="3" height="1"/><rect x="612" y="522" width="1" height="1"/></svg></div>
</body></html>
